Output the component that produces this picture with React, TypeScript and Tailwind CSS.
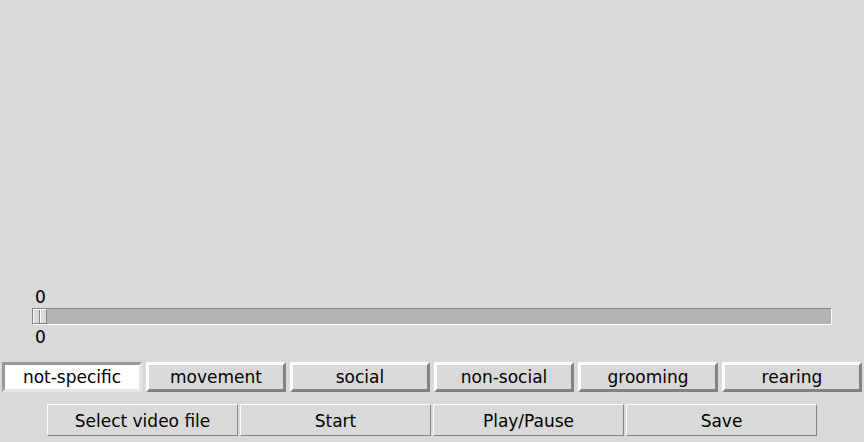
import React from "react";

const cats = ["not-specific", "movement", "social", "non-social", "grooming", "rearing"];
const btns = ["Select video file", "Start", "Play/Pause", "Save"];

export default function App() {
  return (
    <div className="w-[864px] h-[442px] bg-[#d9d9d9] flex flex-col font-['DejaVu_Sans',sans-serif] text-[17px] text-black overflow-hidden">
      <div className="h-[287px] shrink-0" />
      <div className="pl-[35px] h-[21px] leading-[21px] shrink-0">0</div>
      <div className="mx-[32px] h-[17px] shrink-0 flex bg-[#b3b3b3] border-t border-l border-t-[#828282] border-l-[#828282] border-b border-r border-b-white border-r-white">
        <div className="w-[14px] h-full flex justify-center bg-[#d9d9d9] border-t border-l border-t-white border-l-white border-b border-r border-b-[#828282] border-r-[#828282]">
          <div className="w-px h-full bg-[#828282]" />
          <div className="w-px h-full bg-white" />
        </div>
      </div>
      <div className="pl-[35px] h-[21px] leading-[25px] shrink-0">0</div>
      <div className="mt-[16px] h-[30px] px-[2px] flex gap-[4px] shrink-0">
        {cats.map((c, i) => (
          <div
            key={c}
            className={
              i === 0
                ? "w-[140px] h-full pt-[2px] flex items-center justify-center bg-white border-[3px] border-t-[#999999] border-l-[#999999] border-b-[#e6e6e6] border-r-[#e6e6e6]"
                : "w-[140px] h-full pt-[2px] flex items-center justify-center bg-[#d9d9d9] border-[3px] border-t-white border-l-white border-b-[#828282] border-r-[#828282]"
            }
          >
            {c}
          </div>
        ))}
      </div>
      <div className="mt-[12px] h-[32px] flex justify-center gap-[2px] shrink-0">
        {btns.map((b) => (
          <div
            key={b}
            className="w-[191px] h-full pt-[4px] flex items-center justify-center bg-[#d9d9d9] border border-t-white border-l-white border-b-[#828282] border-r-[#828282]"
          >
            {b}
          </div>
        ))}
      </div>
    </div>
  );
}
